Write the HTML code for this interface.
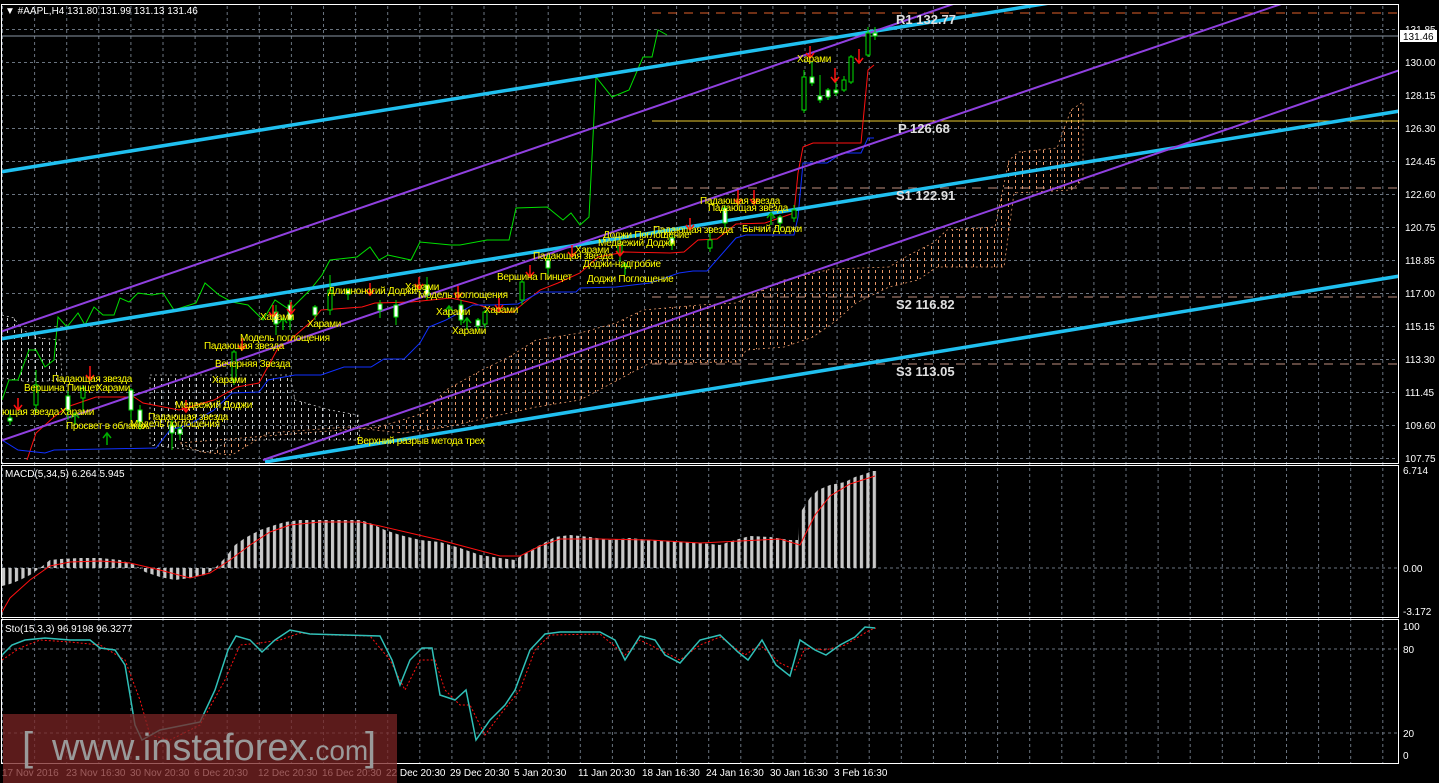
<!DOCTYPE html>
<html><head><meta charset="utf-8"><style>
html,body{margin:0;padding:0;background:#000;width:1439px;height:783px;overflow:hidden}
svg{display:block}
text{font-family:"Liberation Sans","DejaVu Sans",sans-serif}
.ax{fill:#fff;font-size:10px}
.lb{fill:#ffff00;font-size:10px;letter-spacing:-0.3px}
.pv{fill:#e0e0e0;font-family:"Liberation Mono","DejaVu Sans Mono",monospace;font-size:13px;font-weight:bold}
</style></head><body>
<svg width="1439" height="783" viewBox="0 0 1439 783" xmlns="http://www.w3.org/2000/svg">
<defs>
<pattern id="gv" x="2" y="0" width="32.1" height="6" patternUnits="userSpaceOnUse"><rect x="0" y="0" width="1" height="3" fill="#6a7480"/></pattern>
<pattern id="gh" x="0" y="29" width="6" height="33" patternUnits="userSpaceOnUse"><rect x="0" y="0" width="3" height="1" fill="#6a7480"/></pattern>
<pattern id="bars" x="2" y="0" width="6.45" height="10" patternUnits="userSpaceOnUse"><rect x="0" y="0" width="3.2" height="10" fill="#c8c8c8"/></pattern>
<pattern id="co" x="0" y="0" width="7" height="6" patternUnits="userSpaceOnUse"><rect x="0" y="0" width="1" height="3" fill="#e89868"/></pattern>
<pattern id="cw" x="0" y="0" width="7" height="6" patternUnits="userSpaceOnUse"><rect x="0" y="0" width="1" height="3" fill="#c8c8c8"/></pattern>
<clipPath id="cm"><rect x="2" y="5" width="1396" height="458"/></clipPath>
<clipPath id="cs"><rect x="2" y="620" width="1396" height="143"/></clipPath>
</defs>
<rect width="1439" height="783" fill="#000"/>
<rect x="2" y="5" width="1396" height="758" fill="url(#gv)"/>
<rect x="2" y="20" width="1396" height="442" fill="url(#gh)"/>
<line x1="2" y1="568" x2="1398" y2="568" stroke="#6a7480" stroke-dasharray="3,3"/>
<line x1="2" y1="649" x2="1398" y2="649" stroke="#6a7480" stroke-dasharray="3,3"/>
<line x1="2" y1="733" x2="1398" y2="733" stroke="#6a7480" stroke-dasharray="3,3"/>

<g clip-path="url(#cm)">
<polygon points="379,427 402,420 424,413 446,390 482,370 509,357 536,340 580,333 616,323 643,310 700,305 736,303 784,280 832,269 889,267 909,255 933,243 947,230 995,227 1009,160 1019,152 1057,148 1071,110 1083,102 1083,180 1071,190 1014,193 1004,267 937,267 918,280 889,287 856,303 837,320 813,337 784,347 746,350 739,362 650,363 580,400 536,407 491,417 446,427 402,433 348,427 268,433 232,455 201,452 179,443" fill="url(#co)" stroke="#e89868" stroke-dasharray="2,3" stroke-width="0.8"/>
<polygon points="150,375 290,375 295,400 330,410 358,415 360,440 300,440 230,440 210,452 150,445" fill="url(#cw)" stroke="#c8c8c8" stroke-dasharray="2,3" stroke-width="0.8"/>
<polygon points="2,315 14,318 22,330 40,338 60,340 62,380 30,382 2,378" fill="url(#cw)" stroke="#c8c8c8" stroke-dasharray="2,3" stroke-width="0.8"/>
<line x1="652" y1="13" x2="1398" y2="13" stroke="#e0602a" stroke-dasharray="9,7"/>
<line x1="2" y1="36" x2="1398" y2="36" stroke="#8a96a4"/>
<line x1="652" y1="121" x2="1398" y2="121" stroke="#e8c830"/>
<line x1="652" y1="188" x2="1398" y2="188" stroke="#c09080" stroke-dasharray="9,7"/>
<line x1="652" y1="297" x2="1398" y2="297" stroke="#c09080" stroke-dasharray="9,7"/>
<line x1="652" y1="364" x2="1398" y2="364" stroke="#c09080" stroke-dasharray="9,7"/>
<polyline fill="none" stroke="#00e000" stroke-width="1" points="2,400 9,380 18,380 29,350 36,350 45,367 54,360 58,317 67,327 78,313 85,325 94,307 103,315 114,315 120,298 129,302 138,293 152,295 163,293 174,310 196,303 205,283 219,295 232,302 248,305 263,320 275,300 290,310 310,290 322,275 330,260 357,257 370,247 379,260 388,255 411,260 420,242 451,245 460,245 487,240 509,240 516,208 547,207 563,220 571,213 580,225 589,217 596,77 612,97 629,90 643,57 652,57 658,30 667,35"/>
<polyline fill="none" stroke="#ff1010" stroke-width="1" points="27,460 36,433 54,417 67,407 96,397 134,397 143,403 179,410 214,400 237,387 259,383 277,350 290,340 313,320 321,310 362,307 375,303 411,302 451,298 473,303 500,312 513,312 540,290 558,283 580,273 598,257 625,252 670,253 684,252 698,240 717,239 736,224 765,223 794,213 798,173 803,147 813,143 861,143 868,70 874,65"/>
<polyline fill="none" stroke="#1030ff" stroke-width="1" points="2,440 18,450 45,453 54,450 156,448 170,430 188,425 214,410 232,393 259,392 268,380 295,375 321,375 344,367 371,367 384,359 404,359 420,343 429,327 446,320 473,305 491,305 518,304 540,292 576,292 580,288 616,287 650,283 679,273 693,271 707,271 736,238 746,235 794,235 798,217 803,163 827,163 842,153 861,153 868,138 874,138"/>
<line x1="0" y1="172" x2="1068" y2="0" stroke="#20c0f0" stroke-width="3.5"/>
<line x1="0" y1="339" x2="1400" y2="111" stroke="#20c0f0" stroke-width="3.5"/>
<line x1="265" y1="462" x2="1400" y2="276" stroke="#20c0f0" stroke-width="3.5"/>
<line x1="0" y1="332" x2="965" y2="0" stroke="#9040e0" stroke-width="2"/>
<line x1="0" y1="441" x2="1293" y2="0" stroke="#9040e0" stroke-width="2"/>
<line x1="263" y1="460" x2="1400" y2="70" stroke="#9040e0" stroke-width="2"/>
<g stroke="#00e000" stroke-width="1" fill="#fff">
<line x1="10" y1="410" x2="10" y2="425"/><rect x="8" y="418" width="4" height="3"/>
<line x1="36" y1="370" x2="36" y2="412"/><rect x="34" y="385" width="4" height="20" fill="#000"/>
<line x1="68" y1="390" x2="68" y2="420"/><rect x="66" y="396" width="4" height="14"/>
<line x1="83" y1="385" x2="83" y2="412"/><rect x="81" y="388" width="4" height="10" fill="#000"/>
<line x1="131" y1="388" x2="131" y2="420"/><rect x="129" y="390" width="4" height="20"/>
<line x1="140" y1="405" x2="140" y2="430"/><rect x="138" y="410" width="4" height="12"/>
<line x1="172" y1="420" x2="172" y2="450"/><rect x="170" y="425" width="4" height="8"/>
<line x1="180" y1="425" x2="180" y2="440"/><rect x="178" y="429" width="4" height="5"/>
<line x1="234" y1="350" x2="234" y2="385"/><rect x="232" y="352" width="4" height="28" fill="#000"/>
<line x1="276" y1="305" x2="276" y2="335"/><rect x="274" y="312" width="4" height="12"/>
<line x1="290" y1="300" x2="290" y2="330"/><rect x="288" y="305" width="4" height="15"/>
<line x1="315" y1="305" x2="315" y2="320"/><rect x="313" y="307" width="4" height="8"/>
<line x1="330" y1="275" x2="330" y2="315"/><rect x="328" y="290" width="4" height="20" fill="#000"/>
<line x1="348" y1="288" x2="348" y2="300"/><rect x="346" y="290" width="4" height="4"/>
<line x1="380" y1="300" x2="380" y2="318"/><rect x="378" y="304" width="4" height="6"/>
<line x1="396" y1="300" x2="396" y2="325"/><rect x="394" y="305" width="4" height="12"/>
<line x1="427" y1="277" x2="427" y2="300"/><rect x="425" y="285" width="4" height="10"/>
<line x1="461" y1="300" x2="461" y2="325"/><rect x="459" y="305" width="4" height="15"/>
<line x1="478" y1="318" x2="478" y2="330"/><rect x="476" y="320" width="4" height="6"/>
<line x1="485" y1="310" x2="485" y2="328"/><rect x="483" y="312" width="4" height="12" fill="#000"/>
<line x1="522" y1="280" x2="522" y2="305"/><rect x="520" y="282" width="4" height="18" fill="#000"/>
<line x1="548" y1="255" x2="548" y2="275"/><rect x="546" y="260" width="4" height="8"/>
<line x1="620" y1="238" x2="620" y2="262"/><rect x="618" y="245" width="4" height="8" fill="#000"/>
<line x1="672" y1="235" x2="672" y2="250"/><rect x="670" y="238" width="4" height="6"/>
<line x1="710" y1="232" x2="710" y2="252"/><rect x="708" y="240" width="4" height="8" fill="#000"/>
<line x1="725" y1="205" x2="725" y2="228"/><rect x="723" y="208" width="4" height="15"/>
<line x1="780" y1="215" x2="780" y2="230"/><rect x="778" y="217" width="4" height="6"/>
<line x1="794" y1="205" x2="794" y2="222"/><rect x="792" y="210" width="4" height="8" fill="#000"/>
<line x1="804" y1="70" x2="804" y2="113"/><rect x="802" y="77" width="4" height="33" fill="#000"/>
<line x1="812" y1="62" x2="812" y2="86"/><rect x="810" y="77" width="4" height="6"/>
<line x1="820" y1="75" x2="820" y2="103"/><rect x="818" y="96" width="4" height="4"/>
<line x1="828" y1="88" x2="828" y2="100"/><rect x="826" y="90" width="4" height="7"/>
<line x1="836" y1="78" x2="836" y2="96"/><rect x="834" y="90" width="4" height="3"/>
<line x1="844" y1="76" x2="844" y2="92"/><rect x="842" y="80" width="4" height="10" fill="#000"/>
<line x1="851" y1="55" x2="851" y2="84"/><rect x="849" y="57" width="4" height="25" fill="#000"/>
<line x1="868" y1="27" x2="868" y2="57"/><rect x="866" y="33" width="4" height="22" fill="#000"/>
<line x1="875" y1="27" x2="875" y2="40"/><rect x="873" y="33" width="4" height="3"/>
</g>
<g fill="none" stroke="#ff1010" stroke-width="1.5">
<path d="M18,398 v12 M14,405 l4,5 l4,-5"/><path d="M90,366 v14 M86,375 l4,5 l4,-5"/>
<path d="M186,400 v12 M182,407 l4,5 l4,-5"/><path d="M242,338 v12 M238,345 l4,5 l4,-5"/>
<path d="M273,305 v12 M269,312 l4,5 l4,-5"/><path d="M291,302 v12 M287,309 l4,5 l4,-5"/>
<path d="M370,283 v12 M366,290 l4,5 l4,-5"/><path d="M419,277 v12 M415,284 l4,5 l4,-5"/>
<path d="M458,286 v12 M454,293 l4,5 l4,-5"/><path d="M499,298 v12 M495,305 l4,5 l4,-5"/>
<path d="M530,265 v12 M526,272 l4,5 l4,-5"/><path d="M572,245 v12 M568,252 l4,5 l4,-5"/>
<path d="M620,244 v12 M616,251 l4,5 l4,-5"/><path d="M690,218 v12 M686,225 l4,5 l4,-5"/>
<path d="M738,190 v14 M734,199 l4,5 l4,-5"/><path d="M754,190 v14 M750,199 l4,5 l4,-5"/>
<path d="M810,46 v12 M806,53 l4,5 l4,-5"/><path d="M835,68 v14 M831,77 l4,5 l4,-5"/>
<path d="M859,49 v14 M855,58 l4,5 l4,-5"/>
</g>
<g fill="none" stroke="#00b000" stroke-width="1.5">
<path d="M75,425 v-12 M71,418 l4,-5 l4,5"/><path d="M107,445 v-12 M103,438 l4,-5 l4,5"/>
<path d="M283,330 v-12 M279,323 l4,-5 l4,5"/><path d="M449,318 v-12 M445,311 l4,-5 l4,5"/>
<path d="M467,330 v-12 M463,323 l4,-5 l4,5"/><path d="M625,275 v-12 M621,268 l4,-5 l4,5"/>
<path d="M771,225 v-12 M767,218 l4,-5 l4,5"/>
</g>
<g class="lb">
<text x="2" y="415">ющая звезда</text><text x="60" y="415">Харами</text>
<text x="24" y="391">Вершина Пинцет</text><text x="96" y="391">Харами</text>
<text x="52" y="382">Падающая звезда</text>
<text x="66" y="429">Просвет в облаках</text>
<text x="148" y="420">Падающая звезда</text><text x="130" y="427">Модель поглощения</text>
<text x="175" y="408">Медвежий Доджи</text>
<text x="212" y="383">Харами</text><text x="215" y="367">Вечерняя Звезда</text>
<text x="204" y="349">Падающая звезда</text><text x="240" y="341">Модель поглощения</text>
<text x="260" y="320">Харами</text><text x="307" y="327">Харами</text>
<text x="328" y="294">Длинноногий Доджи</text><text x="405" y="290">Харами</text>
<text x="418" y="298">Модель поглощения</text>
<text x="436" y="315">Харами</text><text x="484" y="313">Харами</text><text x="452" y="334">Харами</text>
<text x="357" y="444">Верхний разрыв метода трех</text>
<text x="497" y="280">Вершина Пинцет</text>
<text x="533" y="259">Падающая звезда</text><text x="575" y="253">Харами</text>
<text x="598" y="246">Медвежий Доджи</text><text x="603" y="238">Доджи Поглощение</text>
<text x="583" y="267">Доджи-надгробие</text><text x="587" y="282">Доджи Поглощение</text>
<text x="653" y="233">Падающая звезда</text>
<text x="700" y="204">Падающая звезда</text><text x="708" y="211">Падающая звезда</text>
<text x="742" y="232">Бычий Доджи</text>
<text x="797" y="62">Харами</text>
</g>
<g class="pv">
<text x="896" y="24">R1 132.77</text><text x="898" y="133">P 126.68</text>
<text x="896" y="200">S1 122.91</text><text x="896" y="309">S2 116.82</text><text x="896" y="376">S3 113.05</text>
</g>
</g>

<polygon fill="url(#bars)" points="2,568 2,586 10,584 20,580 30,575 40,568 50,560 60,559 80,558 100,558 120,560 135,565 145,572 160,577 175,580 190,578 205,575 215,568 225,558 235,545 245,538 260,530 275,525 285,522 300,520 360,520 370,523 385,530 400,535 420,540 440,542 460,548 480,555 500,558 515,560 525,553 540,545 555,537 570,535 590,537 610,540 630,538 650,540 670,541 700,543 720,545 735,540 750,536 770,537 790,540 798,540 800,513 810,498 818,490 830,485 845,482 855,477 865,474 872,471 878,471 878,568"/>
<polyline fill="none" stroke="#ff1010" stroke-width="1" points="2,612 10,598 30,580 50,566 70,562 100,561 130,563 160,570 190,578 210,573 230,560 250,545 270,532 290,525 320,522 360,522 380,526 410,533 440,540 470,548 500,556 520,556 540,546 560,539 600,539 650,540 700,543 740,541 780,539 800,545 815,515 830,496 850,484 875,476"/>

<g clip-path="url(#cs)">
<polyline fill="none" stroke="#ff1010" stroke-width="1" stroke-dasharray="2,2" points="2,660 20,648 40,640 70,642 100,645 125,660 140,700 150,735 170,740 200,725 225,680 240,645 260,643 280,640 300,633 330,635 370,636 390,660 405,690 420,660 435,660 445,690 460,705 470,705 485,735 500,715 520,690 535,650 550,635 600,634 625,655 640,640 660,650 680,660 700,645 720,637 745,655 760,645 780,663 795,670 805,648 825,650 845,645 870,630 876,628"/>
<polyline fill="none" stroke="#30c0b8" stroke-width="1.5" points="2,655 12,645 25,640 45,638 70,640 90,640 100,648 115,650 125,665 135,725 142,740 160,730 185,725 200,722 215,690 228,650 236,636 250,640 262,652 275,640 290,630 310,634 380,636 392,660 400,685 410,660 422,648 432,648 440,695 455,700 466,690 476,740 490,720 505,705 515,690 530,650 545,634 560,632 600,632 615,640 625,660 640,636 655,640 665,655 680,663 700,640 720,635 738,652 748,660 762,640 776,665 790,676 800,640 815,650 826,655 840,645 855,637 865,627 875,628"/>
</g>

<rect x="1.5" y="4.5" width="1397" height="459" fill="none" stroke="#fff"/>
<rect x="1.5" y="465.5" width="1397" height="152" fill="none" stroke="#fff"/>
<rect x="1.5" y="619.5" width="1397" height="144" fill="none" stroke="#fff"/>

<text x="5" y="14" fill="#fff" font-size="10">▼ #AAPL,H4  131.80 131.99 131.13 131.46</text>
<text x="5" y="477" fill="#fff" font-size="10">MACD(5,34,5) 6.264 5.945</text>
<text x="5" y="632" fill="#fff" font-size="10">Sto(15,3,3) 96.9198 96.3277</text>

<g class="ax">
<text x="1405" y="33">131.85</text>
<text x="1405" y="66">130.00</text><text x="1405" y="99">128.15</text><text x="1405" y="132">126.30</text>
<text x="1405" y="165">124.45</text><text x="1405" y="198">122.60</text><text x="1405" y="231">120.75</text>
<text x="1405" y="264">118.85</text><text x="1405" y="297">117.00</text><text x="1405" y="330">115.15</text>
<text x="1405" y="363">113.30</text><text x="1405" y="396">111.45</text><text x="1405" y="429">109.60</text>
<text x="1405" y="462">107.75</text>
<text x="1403" y="474">6.714</text><text x="1403" y="572">0.00</text><text x="1403" y="615">-3.172</text>
<text x="1403" y="630">100</text><text x="1403" y="653">80</text><text x="1403" y="737">20</text><text x="1403" y="759">0</text>
</g>
<rect x="1400" y="30" width="37" height="12" fill="#fff"/>
<text x="1403" y="40" fill="#000" font-size="10">131.46</text>

<g class="ax">
<text x="2" y="776">17 Nov 2016</text><text x="66" y="776">23 Nov 16:30</text><text x="130" y="776">30 Nov 20:30</text>
<text x="194" y="776">6 Dec 20:30</text><text x="258" y="776">12 Dec 20:30</text><text x="322" y="776">16 Dec 20:30</text>
<text x="386" y="776">22 Dec 20:30</text><text x="450" y="776">29 Dec 20:30</text><text x="514" y="776">5 Jan 20:30</text>
<text x="578" y="776">11 Jan 20:30</text><text x="642" y="776">18 Jan 16:30</text><text x="706" y="776">24 Jan 16:30</text>
<text x="770" y="776">30 Jan 16:30</text><text x="834" y="776">3 Feb 16:30</text>
</g>

<rect x="3" y="714" width="394" height="69" fill="#7a2424" opacity="0.75"/>
<text x="22" y="760" fill="#9a9a9a" font-size="40">[</text>
<text x="52" y="760" fill="#9a9a9a" font-size="38">www.instaforex<tspan font-size="28">.com</tspan></text>
<text x="365" y="760" fill="#9a9a9a" font-size="40">]</text>
</svg>
</body></html>
